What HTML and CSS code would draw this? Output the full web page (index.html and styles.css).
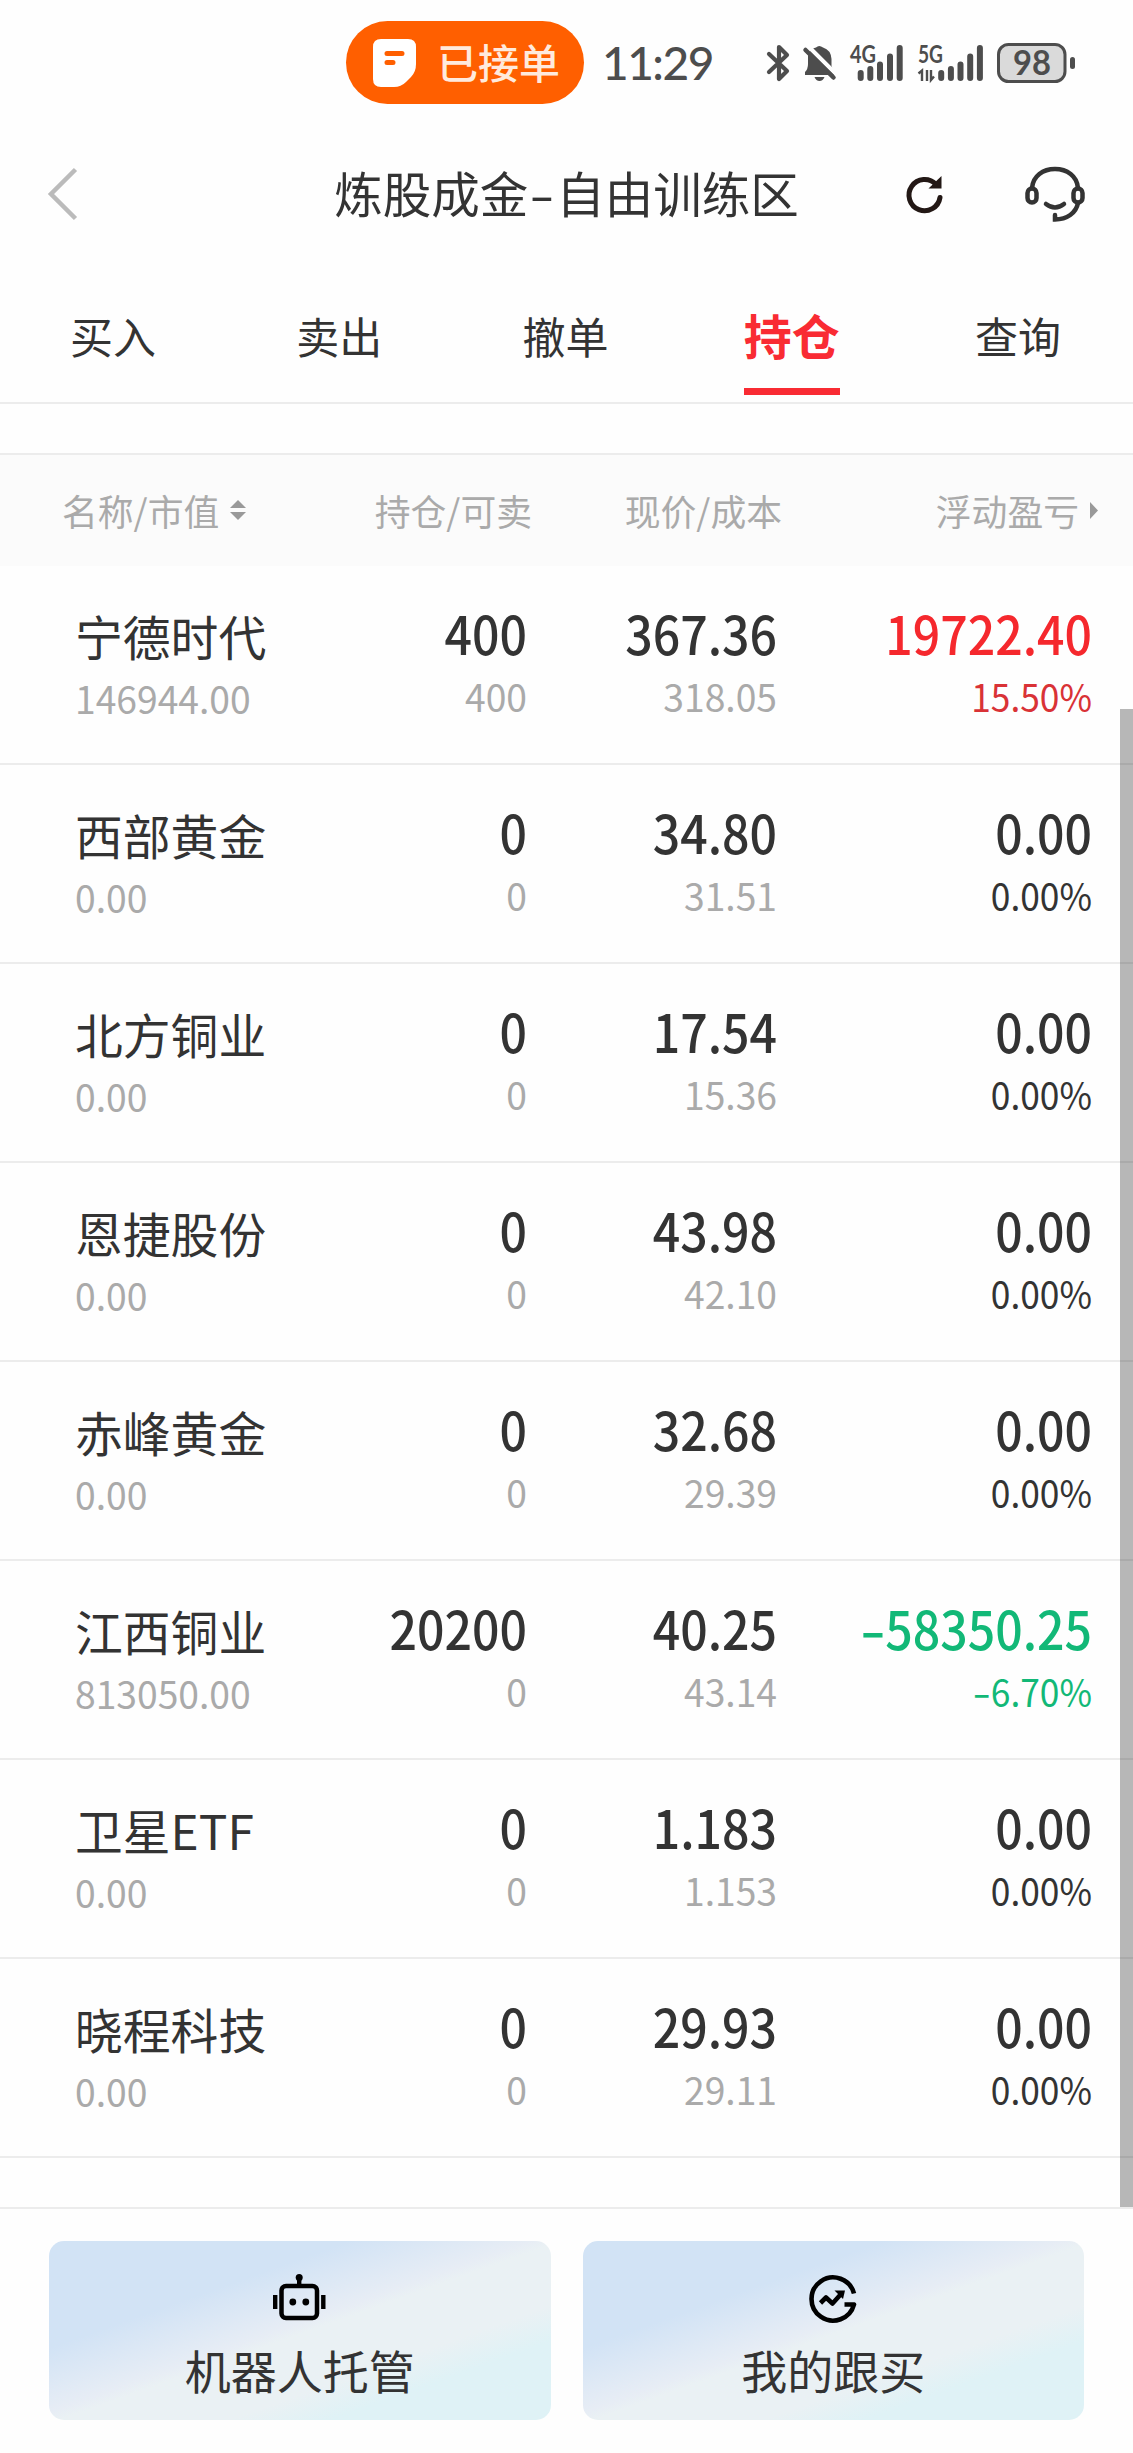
FILE: index.html
```
<!DOCTYPE html>
<html lang="zh-CN">

<head>
  <meta charset="UTF-8">
  <meta name="viewport" content="width=device-width, initial-scale=1">
  <title>炼股成金-自由训练区</title>

  <link rel="stylesheet" href="styles.css">
</head>

<body>
  <div class="status">
    <div class="pill">
      <svg class="pill_icon" width="43" height="48" viewBox="0 0 43 48">
        <path d="M8 0H35Q43 0 43 8V25Q43 33 38 38L33 43Q28 48 21 48H8Q0 48 0 40V8Q0 0 8 0Z" fill="#fff" />
        <path d="M14 14.5H29M14 23.5H20" stroke="#ff5f00" stroke-width="5" stroke-linecap="round" />
      </svg>
      <span>已接单</span>
    </div>
    <span class="hora">11:29</span>
    <svg class="bt" width="24" height="38" viewBox="0 0 24 38">
      <path d="M3 10L21 27L13 35V3L21 11L3 28" fill="none" stroke="#4d4d4d" stroke-width="4.2" stroke-linecap="round" stroke-linejoin="round" />
    </svg>
    <svg class="bell" width="33" height="38" viewBox="0 0 33 38">
      <path d="M5 11Q8 4 13 3.500Q16 .500 20 3.500Q28 6 28.500 15V22L31 29V31H2V28Q5 25 5 20Z" fill="#4d4d4d" />
      <path d="M11.500 33H21.500Q20 37 16.500 37T11.500 33Z" fill="#4d4d4d" />
      <path d="M5 2L34 31" stroke="#fefefe" stroke-width="4" />
      <path d="M2.500 6L30.500 33.500" stroke="#4d4d4d" stroke-width="4.500" stroke-linecap="round" />
    </svg>
    <svg class="sinal" width="54" height="40" viewBox="0 0 54 40">
      <text class="rede" x="0" y="20" textLength="26" lengthAdjust="spacingAndGlyphs">4G</text>
      <path class="barras" d="M10.700 30V35M20.300 26V35M30 21.500V35M40 13.500V35M49.700 5V35" />
    </svg>
    <svg class="sinal" width="66" height="40" viewBox="0 0 66 40">
      <text class="rede" x="0" y="20" textLength="25" lengthAdjust="spacingAndGlyphs">5G</text>
      <path d="M.500 30.500L4 27.500V38M9 27V38M13 27V37L16 33.500" fill="none" stroke="#4d4d4d" stroke-width="2.400" />
      <path class="barras" d="M23.200 30V35M32.900 26V35M42.500 21.500V35M52.200 13.500V35M61.900 5V35" />
    </svg>
    <svg class="bateria" width="78" height="40" viewBox="0 0 78 40">
      <rect x="1.500" y="1.500" width="66.500" height="37" rx="10" fill="#dadada" stroke="#4d4d4d" stroke-width="3" />
      <rect x="73" y="14" width="5" height="12" rx="2.500" fill="#4d4d4d" />
      <text class="carga" x="16" y="32" textLength="38" lengthAdjust="spacingAndGlyphs">98</text>
    </svg>
  </div>

  <div class="topo">
    <svg class="voltar" width="30" height="52" viewBox="0 0 30 52">
      <path d="M27.500 1.500L3 26L27.500 50.500" fill="none" stroke="#bbb" stroke-width="4.500" />
    </svg>
    <h1 class="titulo">炼股成金<span class="hifen">-</span>自由训练区</h1>
    <div class="acoes">
      <svg width="37" height="38" viewBox="0 0 37 38">
        <path d="M30 9.500A15.600 15.600 0 1 0 34 22.500" fill="none" stroke="#231815" stroke-width="5" stroke-linecap="round" />
        <path d="M35.500 1V13.500H22.500Z" fill="#231815" />
      </svg>
      <svg width="60" height="56" viewBox="0 0 60 56" fill="none" stroke="#333" stroke-width="4.500" stroke-linecap="round">
        <path d="M7 22C8 10 18 3 30 3S52 10 53 22" />
        <rect x="2.500" y="22.500" width="9" height="14" rx="4.500" />
        <rect x="48.500" y="22.500" width="9" height="14" rx="4.500" />
        <path d="M21 38Q30 45 39 38" />
        <path d="M53 37C51 47 42 53.500 30 53.500V49" />
      </svg>
    </div>
  </div>

  <div class="abas">
    <div class="aba">买入</div>
    <div class="aba">卖出</div>
    <div class="aba">撤单</div>
    <div class="aba ativa"><span>持仓</span></div>
    <div class="aba">查询</div>
  </div>

  <div class="cabecalho">
    <div class="rotulo">名称/市值
      <svg width="16" height="20" viewBox="0 0 16 20">
        <path d="M8 0L16 8H0ZM8 20L0 12H16Z" fill="#999" />
      </svg>
    </div>
    <div class="rotulo direita">持仓/可卖</div>
    <div class="rotulo direita">现价/成本</div>
    <div class="rotulo direita">浮动盈亏
      <svg width="8" height="17" viewBox="0 0 8 17">
        <path d="M0 0L8 8.500L0 17Z" fill="#999" />
      </svg>
    </div>
  </div>

  <div class="lista">
    <div class="linha">
      <div class="acao"><p class="nome">宁德时代</p><p class="menor">146944.00</p></div>
      <div class="num"><p class="maior">400</p><p class="menor">400</p></div>
      <div class="num"><p class="maior">367.36</p><p class="menor">318.05</p></div>
      <div class="num lucro sobe"><p class="maior">19722.40</p><p class="menor">15.50%</p></div>
    </div>
    <div class="linha">
      <div class="acao"><p class="nome">西部黄金</p><p class="menor">0.00</p></div>
      <div class="num"><p class="maior">0</p><p class="menor">0</p></div>
      <div class="num"><p class="maior">34.80</p><p class="menor">31.51</p></div>
      <div class="num lucro"><p class="maior">0.00</p><p class="menor">0.00%</p></div>
    </div>
    <div class="linha">
      <div class="acao"><p class="nome">北方铜业</p><p class="menor">0.00</p></div>
      <div class="num"><p class="maior">0</p><p class="menor">0</p></div>
      <div class="num"><p class="maior">17.54</p><p class="menor">15.36</p></div>
      <div class="num lucro"><p class="maior">0.00</p><p class="menor">0.00%</p></div>
    </div>
    <div class="linha">
      <div class="acao"><p class="nome">恩捷股份</p><p class="menor">0.00</p></div>
      <div class="num"><p class="maior">0</p><p class="menor">0</p></div>
      <div class="num"><p class="maior">43.98</p><p class="menor">42.10</p></div>
      <div class="num lucro"><p class="maior">0.00</p><p class="menor">0.00%</p></div>
    </div>
    <div class="linha">
      <div class="acao"><p class="nome">赤峰黄金</p><p class="menor">0.00</p></div>
      <div class="num"><p class="maior">0</p><p class="menor">0</p></div>
      <div class="num"><p class="maior">32.68</p><p class="menor">29.39</p></div>
      <div class="num lucro"><p class="maior">0.00</p><p class="menor">0.00%</p></div>
    </div>
    <div class="linha">
      <div class="acao"><p class="nome">江西铜业</p><p class="menor">813050.00</p></div>
      <div class="num"><p class="maior">20200</p><p class="menor">0</p></div>
      <div class="num"><p class="maior">40.25</p><p class="menor">43.14</p></div>
      <div class="num lucro desce"><p class="maior"><span class="menos">-</span>58350.25</p><p class="menor"><span class="menos">-</span>6.70%</p></div>
    </div>
    <div class="linha">
      <div class="acao"><p class="nome">卫星ETF</p><p class="menor">0.00</p></div>
      <div class="num"><p class="maior">0</p><p class="menor">0</p></div>
      <div class="num"><p class="maior">1.183</p><p class="menor">1.153</p></div>
      <div class="num lucro"><p class="maior">0.00</p><p class="menor">0.00%</p></div>
    </div>
    <div class="linha">
      <div class="acao"><p class="nome">晓程科技</p><p class="menor">0.00</p></div>
      <div class="num"><p class="maior">0</p><p class="menor">0</p></div>
      <div class="num"><p class="maior">29.93</p><p class="menor">29.11</p></div>
      <div class="num lucro"><p class="maior">0.00</p><p class="menor">0.00%</p></div>
    </div>
    <div class="rolagem"></div>
  </div>

  <div class="rodape">
    <div class="botao">
      <svg width="53" height="48" viewBox="0 0 53 48">
        <rect x="8.500" y="12" width="35.500" height="32" rx="4.500" fill="none" stroke="#000" stroke-width="4.500" />
        <path d="M2.200 21V35M50.300 21V35M26.200 4V11" stroke="#000" stroke-width="4.400" />
        <circle cx="26.200" cy="3.500" r="3.500" />
        <circle cx="19.800" cy="28" r="3.400" />
        <circle cx="32.800" cy="28" r="3.400" />
      </svg>
      <span>机器人托管</span>
    </div>
    <div class="botao">
      <svg width="48" height="48" viewBox="0 0 48 48" fill="none" stroke="#000" stroke-width="4.600" stroke-linejoin="round">
        <path d="M45 19.500A21.600 21.600 0 1 0 45 30.500H35.500" />
        <path d="M11.500 29L17 23.500L23.500 29.500L32.500 19.500" />
        <path d="M25.500 16.500H36L34 25Z" fill="#000" stroke="none" />
      </svg>
      <span>我的跟买</span>
    </div>
  </div>
</body>

</html>
```
FILE: styles.css
```
* {
  margin: 0;
  padding: 0;
  border: none;
  box-sizing: border-box;
}

body {
  display: flex;
  flex-direction: column;
  width: 1133px;
  height: 2453px;
  background-color: #fefefe;
  color: #333;
  font-family: "Noto Sans CJK SC", sans-serif;
  overflow: hidden;
}

svg {
  display: block;
  flex-shrink: 0;
  overflow: visible;
}

/* barra de status */
.status {
  display: flex;
  align-items: center;
  height: 125px;
  padding-left: 346px;
}

.pill {
  display: flex;
  align-items: center;
  width: 238px;
  height: 83px;
  padding-left: 27px;
  border-radius: 42px;
  background-color: #ff5f00;
  color: #ffeadd;
  font-size: 41px;
  font-weight: 500;
  line-height: 78px;
}

.pill_icon {
  margin-right: 21px;
}

.pill span {
  padding-bottom: 4px;
}

.hora {
  width: 113px;
  margin-left: 18px;
  color: #4d4d4d;
  font-family: Lato, sans-serif;
  font-size: 46px;
  font-weight: 500;
  letter-spacing: -1.5px;
  white-space: nowrap;
}

.bt {
  margin-left: 51px;
}

.bell {
  margin-left: 13px;
}

.sinal {
  margin-left: 14px;
}

.bateria {
  margin-left: 13px;
}

.rede {
  fill: #4d4d4d;
  font-family: Lato, sans-serif;
  font-size: 25px;
  font-weight: bold;
}

.barras {
  stroke: #4d4d4d;
  stroke-width: 6;
  stroke-linecap: round;
}

.carga {
  fill: #4d4d4d;
  font-family: Lato, sans-serif;
  font-size: 34px;
  font-weight: bold;
}

/* titulo */
.topo {
  display: grid;
  grid-template-columns: 280px 1fr 280px;
  align-items: center;
  height: 137px;
  margin-bottom: 2px;
  padding: 0 48px;
}

.titulo {
  font-size: 48.5px;
  font-weight: normal;
  line-height: 60px;
  text-align: center;
  white-space: nowrap;
  padding-bottom: 4px;
}

.hifen {
  display: inline-block;
  width: 28px;
  transform: scaleX(1.5);
}

.acoes {
  display: flex;
  justify-content: flex-end;
  align-items: center;
  gap: 82px;
}

/* abas */
.abas {
  display: grid;
  grid-template-columns: repeat(5, 1fr);
  height: 140px;
  padding-right: 2px;
  border-bottom: 2px solid #ececec;
}

.aba {
  display: flex;
  justify-content: center;
  height: 131px;
  padding-top: 39px;
  font-size: 43px;
  line-height: 64px;
}

.ativa {
  padding-top: 38px;
  color: #f92b33;
  font-size: 48px;
  font-weight: bold;
}

.ativa span {
  border-bottom: 7px solid #f92b33;
}

/* cabecalho da lista */
.cabecalho {
  display: grid;
  grid-template-columns: 220px 250px 250px 316px;
  height: 113px;
  margin-top: 49px;
  padding-left: 62px;
  border-top: 2px solid #ececec;
  background-color: #fbfbfb;
  color: #aaa;
  font-size: 35.8px;
  line-height: 108px;
}

.rotulo {
  display: flex;
  align-items: center;
  height: 110px;
  gap: 11px;
  white-space: nowrap;
}

.direita {
  justify-content: flex-end;
}

/* lista */
.lista {
  position: relative;
  height: 1641px;
}

.linha {
  display: grid;
  grid-template-columns: 200px 252px 250px 315px;
  height: 199px;
  padding-left: 75px;
  padding-right: 41px;
  border-bottom: 2px solid #ececec;
}

.acao {
  padding-top: 40px;
}

.nome {
  margin-bottom: 10px;
  font-size: 47.8px;
  line-height: 60px;
  white-space: nowrap;
}

.num {
  padding-top: 36px;
  text-align: right;
}

.maior {
  margin-bottom: 12px;
  font-size: 53px;
  font-weight: 500;
  line-height: 60px;
  transform: scaleX(.91);
  transform-origin: right;
}

.menor {
  color: #aaa;
  font-size: 38px;
  line-height: 44px;
  transform: scaleX(.98);
  transform-origin: right;
}

.acao .menor {
  transform-origin: left;
}

.lucro .menor {
  color: #333;
  transform: scaleX(.93);
}

.menos {
  display: inline-block;
  width: .5em;
  text-align: center;
  transform: scaleX(1.5);
}

.sobe .maior {
  color: #f5282d;
}

.sobe .menor {
  color: #d93236;
}

.desce .maior,
.desce .menor {
  color: #12b877;
}

.rolagem {
  position: absolute;
  top: 143px;
  right: 0;
  bottom: 0;
  width: 13px;
  background-color: rgba(0, 0, 0, .28);
}

/* botoes de baixo */
.rodape {
  display: flex;
  gap: 32px;
  height: 246px;
  padding: 32px 49px 0;
  border-top: 2px solid #ececec;
}

.botao {
  display: flex;
  flex: 1;
  flex-direction: column;
  align-items: center;
  height: 179px;
  padding-top: 33px;
  border-radius: 15px;
  background: linear-gradient(to bottom right, #d2e3f5 30%, #e7edf5 48%, #eaf1f4 51%, #eaf1f4 68%, #dff2f6 78%);
  font-size: 46px;
}

.botao span {
  margin-top: 17px;
  line-height: 60px;
}
```
